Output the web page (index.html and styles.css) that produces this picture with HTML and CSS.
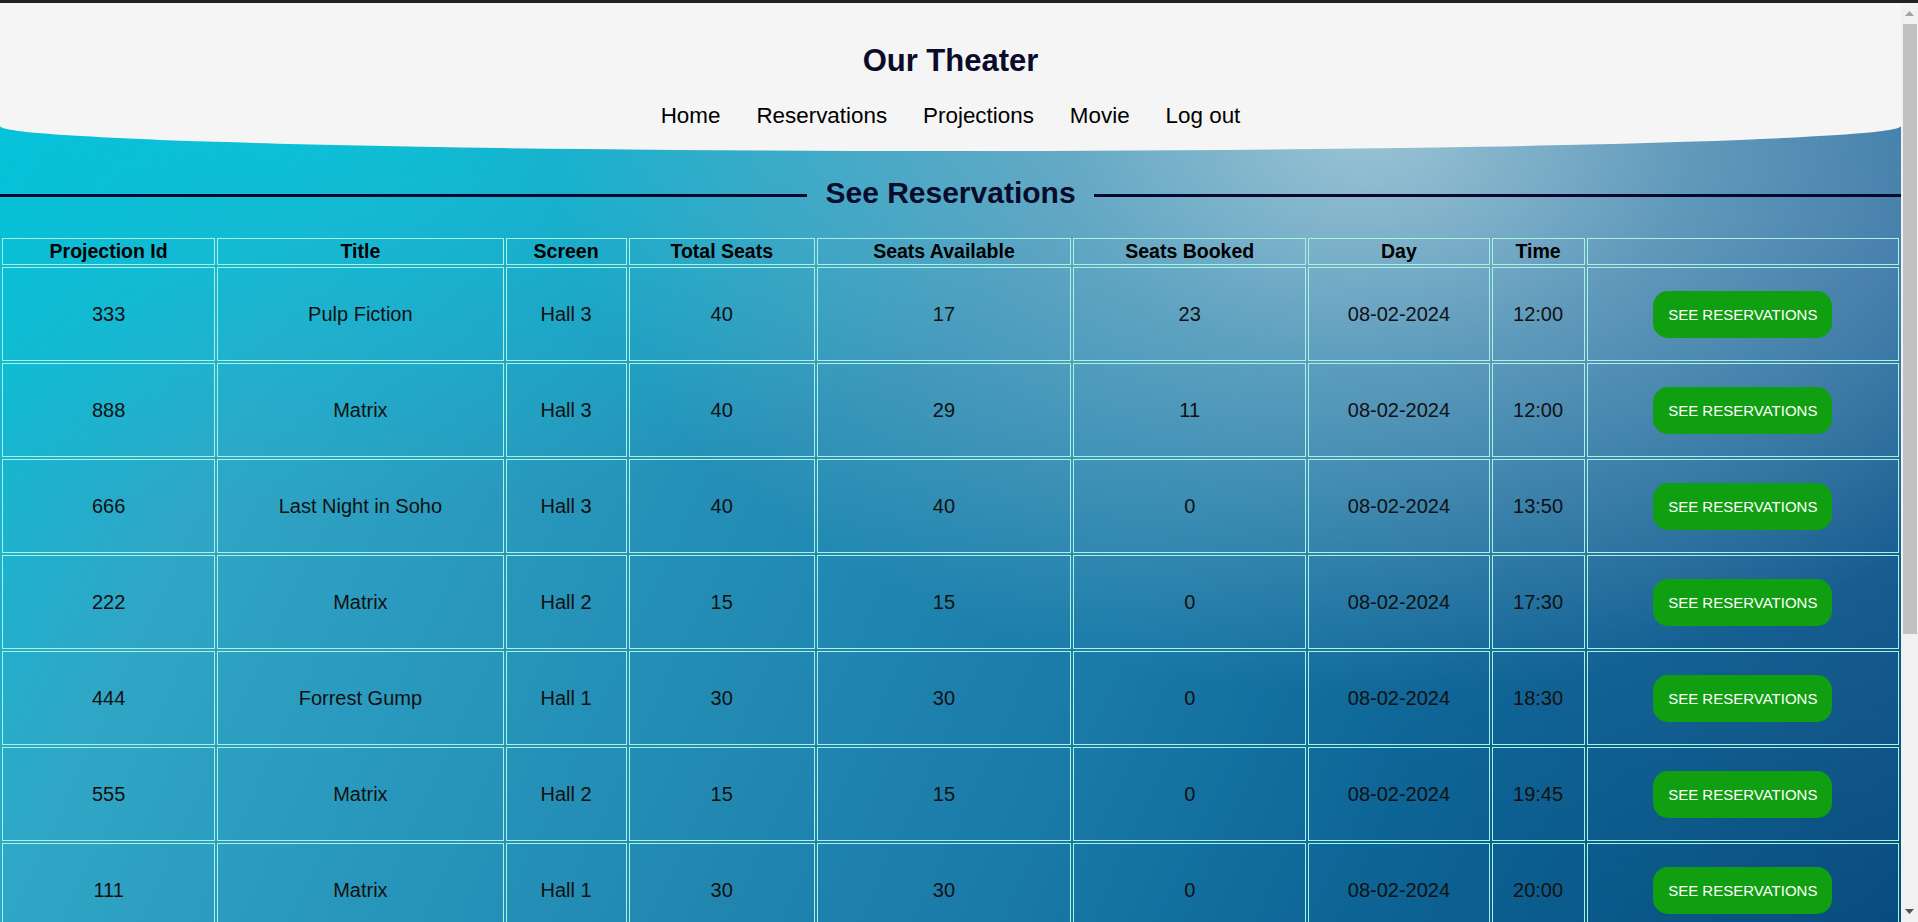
FILE: index.html
```html
<!DOCTYPE html>
<html lang="en">
<head>
<meta charset="utf-8">
<title>Our Theater - See Reservations</title>
<link rel="stylesheet" href="styles.css">
</head>
<body>
<header class="site-header">
  <h1 class="brand">Our Theater</h1>
  <nav class="main-nav">
    <a href="#">Home</a>
    <a href="#">Reservations</a>
    <a href="#">Projections</a>
    <a href="#">Movie</a>
    <a href="#">Log out</a>
  </nav>
</header>
<main class="content">
  <div class="section-title">
    <span class="rule"></span>
    <h2>See Reservations</h2>
    <span class="rule"></span>
  </div>
  <table class="projections">
    <colgroup>
      <col class="c-id"><col class="c-title"><col class="c-screen"><col class="c-total">
      <col class="c-avail"><col class="c-booked"><col class="c-day"><col class="c-time"><col class="c-action">
    </colgroup>
    <thead>
      <tr>
        <th>Projection Id</th><th>Title</th><th>Screen</th><th>Total Seats</th><th>Seats Available</th><th>Seats Booked</th><th>Day</th><th>Time</th><th></th>
      </tr>
    </thead>
    <tbody>
      <tr><td>333</td><td>Pulp Fiction</td><td>Hall 3</td><td>40</td><td>17</td><td>23</td><td>08-02-2024</td><td>12:00</td><td><button class="btn">See reservations</button></td></tr>
      <tr><td>888</td><td>Matrix</td><td>Hall 3</td><td>40</td><td>29</td><td>11</td><td>08-02-2024</td><td>12:00</td><td><button class="btn">See reservations</button></td></tr>
      <tr><td>666</td><td>Last Night in Soho</td><td>Hall 3</td><td>40</td><td>40</td><td>0</td><td>08-02-2024</td><td>13:50</td><td><button class="btn">See reservations</button></td></tr>
      <tr><td>222</td><td>Matrix</td><td>Hall 2</td><td>15</td><td>15</td><td>0</td><td>08-02-2024</td><td>17:30</td><td><button class="btn">See reservations</button></td></tr>
      <tr><td>444</td><td>Forrest Gump</td><td>Hall 1</td><td>30</td><td>30</td><td>0</td><td>08-02-2024</td><td>18:30</td><td><button class="btn">See reservations</button></td></tr>
      <tr><td>555</td><td>Matrix</td><td>Hall 2</td><td>15</td><td>15</td><td>0</td><td>08-02-2024</td><td>19:45</td><td><button class="btn">See reservations</button></td></tr>
      <tr><td>111</td><td>Matrix</td><td>Hall 1</td><td>30</td><td>30</td><td>0</td><td>08-02-2024</td><td>20:00</td><td><button class="btn">See reservations</button></td></tr>
    </tbody>
  </table>
</main>
<div class="scrollbar" aria-hidden="true">
  <span class="sb-arrow"><svg width="9" height="5" viewBox="0 0 9 5"><path d="M0 5 L4.5 0 L9 5 Z" fill="#a3a3a3"/></svg></span>
  <span class="sb-thumb"></span>
  <span class="sb-space"></span>
  <span class="sb-arrow"><svg width="9" height="5" viewBox="0 0 9 5"><path d="M0 0 L9 0 L4.5 5 Z" fill="#505050"/></svg></span>
</div>
</body>
</html>
```

FILE: styles.css
```css
html {
  border-top: 3px solid #202124;
  background:
    radial-gradient(ellipse 820px 560px at 1370px 130px, rgba(176, 208, 220, 0.85) 0%, rgba(176, 208, 220, 0.45) 40%, rgba(176, 208, 220, 0) 100%),
    radial-gradient(ellipse 700px 700px at 1900px 250px, rgba(70, 120, 180, 0.45) 0%, rgba(70, 120, 180, 0) 100%),
    radial-gradient(ellipse 760px 380px at 320px 130px, rgba(0, 200, 220, 0.75) 0%, rgba(0, 200, 220, 0.35) 50%, rgba(0, 200, 220, 0) 100%),
    linear-gradient(115deg, #00c4d9 0%, #30a6c6 18%, #1a7aa8 60%, #0d6596 75%, #064a7a 100%);
}

body {
  margin: 0 17px 0 0;
  font-family: "Liberation Sans", Arial, sans-serif;
  color: #111;
}

.site-header {
  background: #f5f5f5;
  border-radius: 0 0 50% 50% / 0 0 25px 25px;
  padding: 40px 0 22px;
  text-align: center;
}

.brand {
  margin: 0;
  font-size: 31px;
  line-height: 36px;
  font-weight: bold;
  color: #0b0b2a;
}

.main-nav {
  margin-top: 24px;
  display: flex;
  justify-content: center;
  gap: 36px;
  font-size: 22.4px;
  line-height: 26px;
}

.main-nav a {
  color: #000;
  text-decoration: none;
}

.content {
  padding-top: 24px;
}

.section-title {
  display: flex;
  align-items: center;
  gap: 18px;
}

.section-title h2 {
  margin: 0;
  font-size: 30px;
  line-height: 36px;
  font-weight: bold;
  color: #0a0a2a;
}

.section-title .rule {
  flex: 1;
  height: 3px;
  margin-top: 4px;
  background: #06062e;
}

.projections {
  margin-top: 25px;
  width: 100%;
  table-layout: fixed;
  border-collapse: separate;
  border-spacing: 2px;
}

.c-id { width: 213px; }
.c-title { width: 286px; }
.c-screen { width: 121px; }
.c-total { width: 186px; }
.c-avail { width: 254px; }
.c-booked { width: 233px; }
.c-day { width: 181px; }
.c-time { width: 93px; }
.c-action { width: 312px; }

.projections th,
.projections td {
  border: 1px solid #a6f3e3;
  text-align: center;
  vertical-align: middle;
}

.projections th {
  padding: 1px 0;
  font-size: 19.5px;
  line-height: 23px;
  font-weight: bold;
  color: #000;
}

.projections td {
  padding: 23px 0 22px;
  font-size: 20px;
  line-height: 23px;
  color: #111;
}

.btn {
  display: block;
  margin: 0 auto;
  width: 179px;
  height: 47px;
  padding: 0;
  border: none;
  border-radius: 15px;
  background: #0f9f10;
  color: #fff;
  font-family: "Liberation Sans", Arial, sans-serif;
  font-size: 15px;
  line-height: 47px;
  text-transform: uppercase;
  cursor: pointer;
}

.scrollbar {
  position: fixed;
  top: 3px;
  right: 0;
  bottom: 0;
  width: 17px;
  background: #f1f1f1;
  display: flex;
  flex-direction: column;
}

.sb-arrow {
  height: 21px;
  display: flex;
  align-items: center;
  justify-content: center;
}

.sb-thumb {
  height: 610px;
  margin: 0 1px 0 2px;
  background: #c1c1c1;
}

.sb-space {
  flex: 1;
}
```
